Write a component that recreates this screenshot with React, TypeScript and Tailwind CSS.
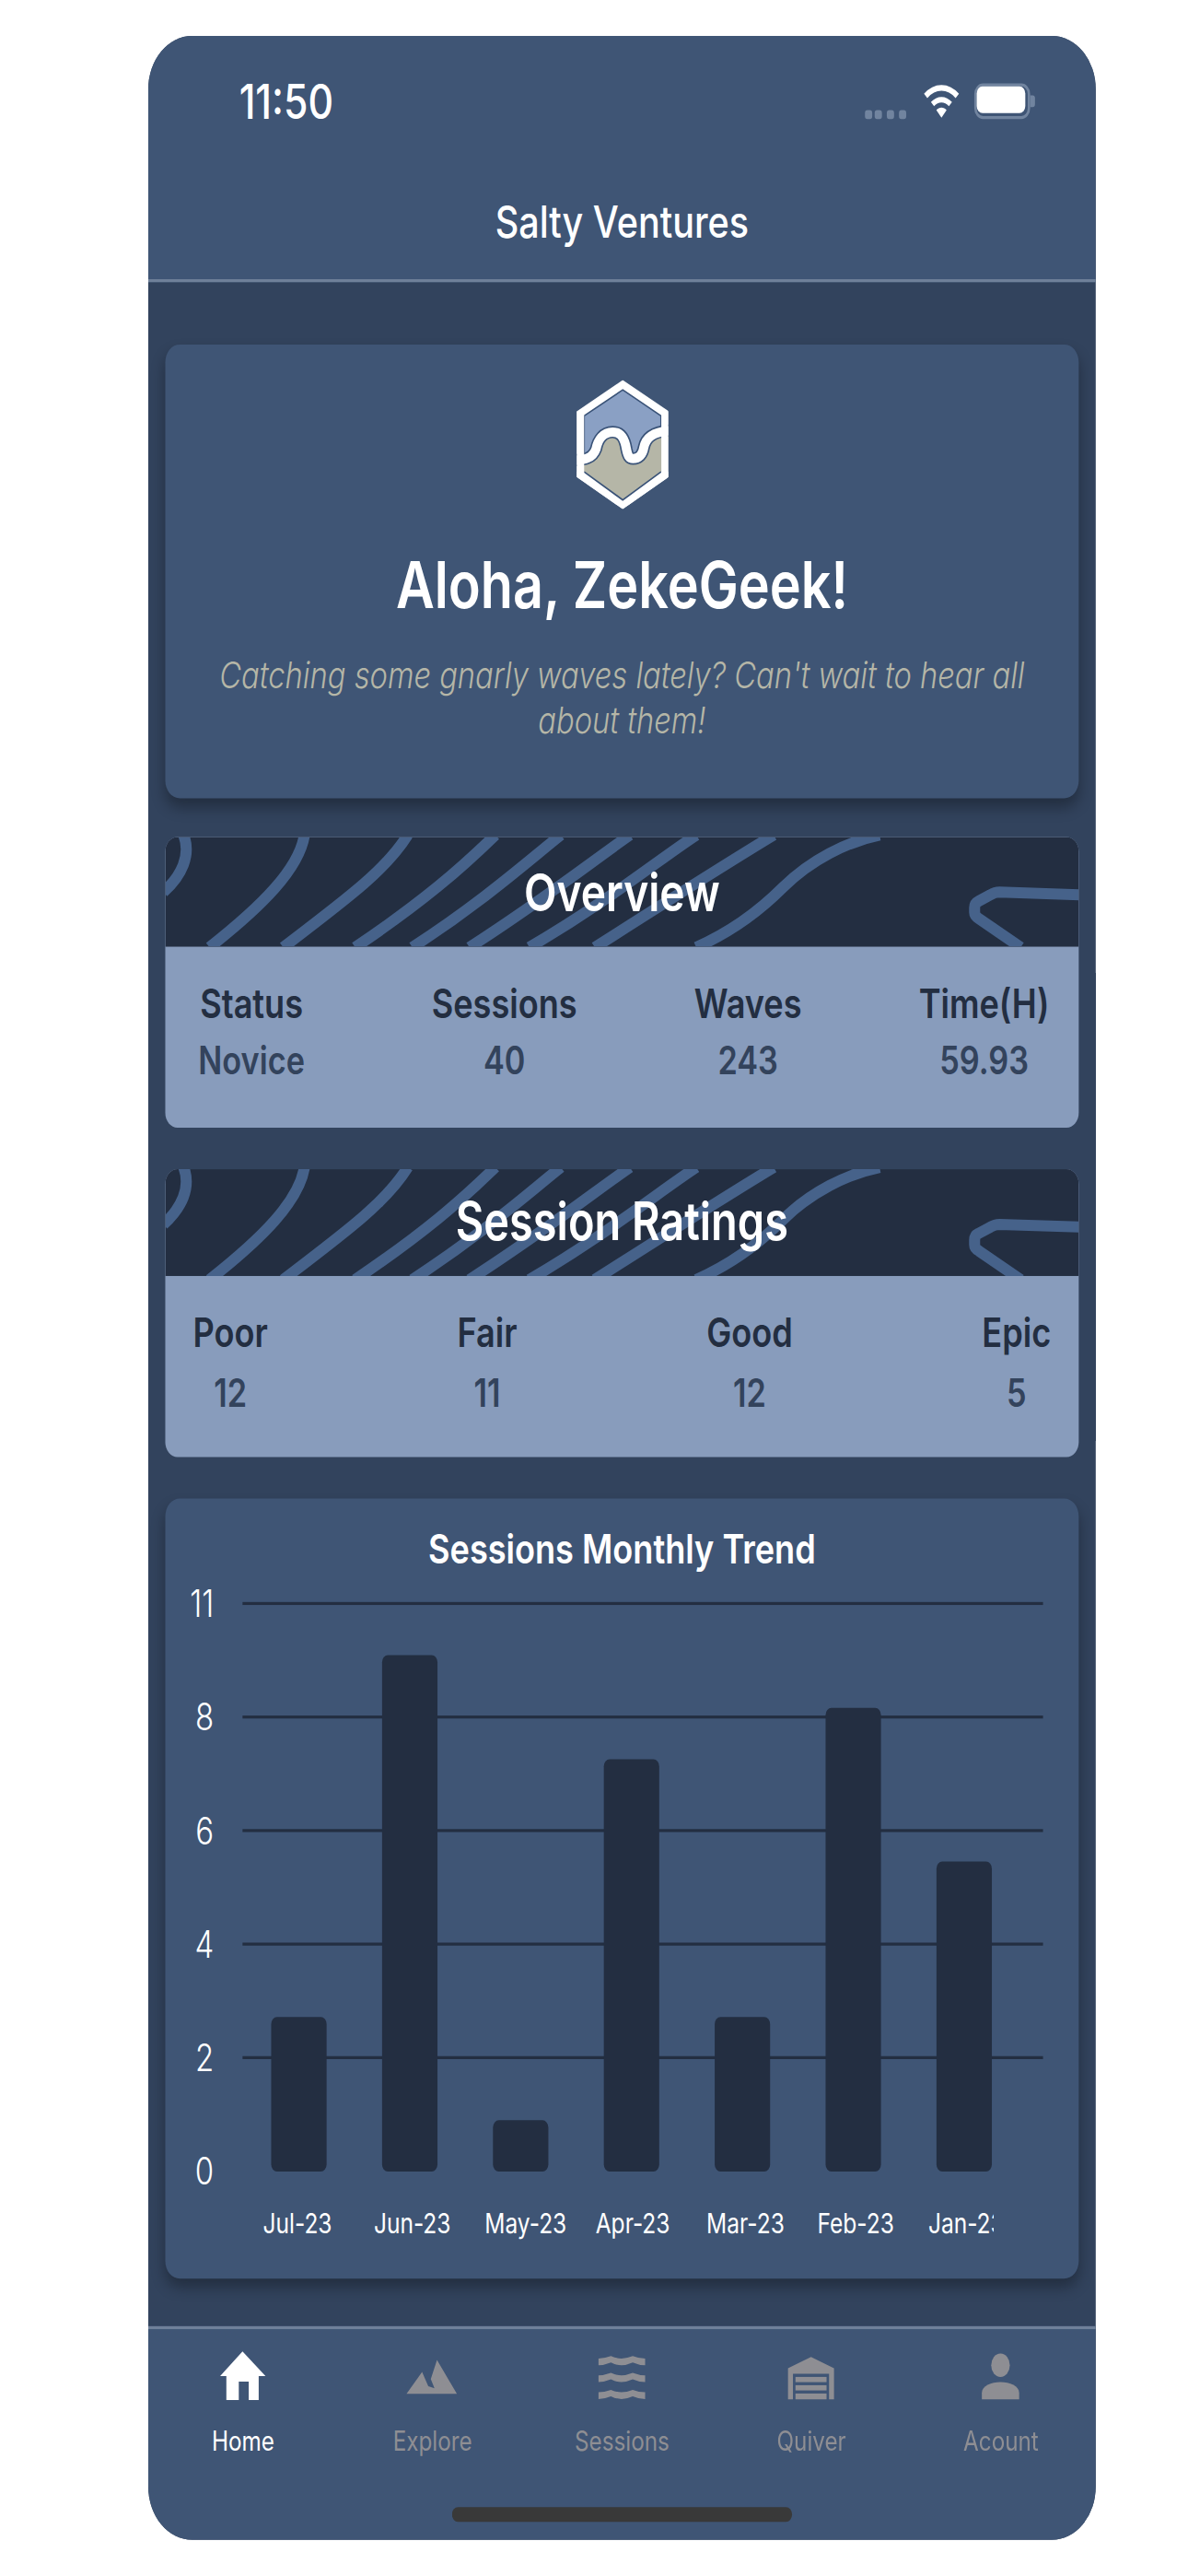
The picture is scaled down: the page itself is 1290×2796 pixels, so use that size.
const waveLines = [
  "M20 -2 C 28 20, 18 42, -2 60",
  "M151 -2 C 145 35, 105 75, 48 120",
  "M263 -2 C 240 35, 200 65, 128 120",
  "M358 -2 C 320 35, 280 70, 206 120",
  "M429 -2 C 395 25, 345 70, 268 120",
  "M504 -2 C 465 25, 415 65, 330 120",
  "M576 -2 C 535 25, 480 70, 395 120",
  "M660 -2 C 620 22, 560 60, 466 120",
  "M775 -2 C 740 5, 700 25, 670 55 C 640 85, 610 105, 576 120",
  "M995 63 L 905 60 Q 900 60 895 63 L 882 70 Q 878 72 878 77 L 878 82 Q 878 86 883 89 L 928 120",
];

const months = ["Jul-23", "Jun-23", "May-23", "Apr-23", "Mar-23", "Feb-23", "Jan-23"];
const barTops = [174.8, 52.8, 209.6, 87.9, 174.8, 70.6, 122.4];
const ticks = ["11", "8", "6", "4", "2", "0"];

function Logo() {
  const wave =
    "M-5 262 C 30 262, 55 255, 66 225 C 72 195, 90 170, 120 170 C 150 170, 160 195, 165 225 C 170 250, 175 257, 187 257 C 205 257, 218 245, 222 220 C 228 190, 250 168, 310 165";
  return (
    <svg viewBox="0 0 306 422" preserveAspectRatio="none" className="w-[38.6px] h-[43.5px] block">
      <defs>
        <clipPath id="hex-outer">
          <polygon points="153,0 303,102 303,317 153,422 3,317 3,102" />
        </clipPath>
      </defs>
      <polygon points="153,0 303,102 303,317 153,422 3,317 3,102" fill="#ffffff" />
      <polygon points="153,32 278,117 278,300 153,392 27,300 27,117" fill="#8aa0c4" stroke="#3a5378" strokeWidth="5" />
      <g clipPath="url(#hex-outer)">
        <path d={wave + " L 278 300 L 153 392 L 27 300 Z"} fill="#b5b6a7" />
        <polygon points="153,392 27,300 0,300 0,422 306,422 306,300 278,300" fill="#ffffff" />
        <polyline points="27,300 153,392 278,300" fill="none" stroke="#3a5378" strokeWidth="5" />
        <path d={wave} fill="none" stroke="#3a5378" strokeWidth="40" />
        <path d={wave} fill="none" stroke="#ffffff" strokeWidth="30" />
        <polyline points="3,102 3,317" fill="none" stroke="#ffffff" strokeWidth="48" />
        <polyline points="303,102 303,317" fill="none" stroke="#ffffff" strokeWidth="48" />
      </g>
    </svg>
  );
}

function SectionHeader({ title, titleSize }: { title: string; titleSize: string }) {
  return (
    <div className="relative h-[36.3px] bg-[#232e41] overflow-hidden flex justify-center">
      <svg viewBox="0 0 991 117" className="absolute inset-0 w-full h-full" preserveAspectRatio="none">
        {waveLines.map((d, i) => (
          <path key={i} d={d} fill="none" stroke="#46628a" strokeWidth="12" />
        ))}
      </svg>
      <div className={"relative text-white font-semibold leading-[22px] " + titleSize}>{title}</div>
    </div>
  );
}

function StatCard({
  title,
  titleSize,
  items,
  className,
  colClass,
}: {
  title: string;
  titleSize: string;
  items: [string, string][];
  className: string;
  colClass: string;
}) {
  return (
    <div className="rounded-[5px] overflow-hidden bg-[#889cbc] h-[97.6px] shrink-0">
      <SectionHeader title={title} titleSize={titleSize} />
      <div className={"flex justify-between pt-[11.2px] " + className}>
        {items.map(([label, value]) => (
          <div key={label} className={"flex flex-col items-center " + colClass}>
            <div className="text-[13.7px] leading-[17px] font-semibold text-[#232e41]">{label}</div>
            <div className="text-[13px] leading-[17px] mt-[2.4px] font-semibold text-[#33435c]">{value}</div>
          </div>
        ))}
      </div>
    </div>
  );
}

function Chart() {
  return (
    <svg viewBox="0 30 376 232" className="block w-[376px] h-[232px]">
      <defs>
        <clipPath id="label-clip">
          <rect x="0" y="230" width="341" height="30" />
        </clipPath>
      </defs>
      {ticks.map((t, i) => {
        const y = 35.4 + i * 38.27;
        return (
          <g key={t}>
            {i < 5 && <rect x="31.8" y={y - 0.5} width="329.5" height="1" fill="#232e41" />}
            <text x="20" y={y + 4.6} textAnchor="end" fontSize="12.5" fontWeight="300" fill="#ffffff">
              {t}
            </text>
          </g>
        );
      })}
      {barTops.map((top, i) => (
        <rect
          key={months[i]}
          x={43.6 + i * 45.64}
          y={top}
          width="22.8"
          height={226.9 - top}
          rx="2.4"
          fill="#232e41"
        />
      ))}
      <g clipPath="url(#label-clip)">
        {months.map((m, i) => (
          <text key={m} x={40.2 + i * 45.64} y="247.8" fontSize="9.3" fill="#ffffff">
            {m}
          </text>
        ))}
      </g>
    </svg>
  );
}

function HomeIcon() {
  return (
    <svg viewBox="0 0 100 170" preserveAspectRatio="none" className="w-[25.6px] h-[17.6px]">
      <path d="M50 5 L87 85 L76 85 L76 163 L60 163 L60 103 L44 103 L44 163 L24 163 L24 85 L14 85 Z" fill="#ffffff" />
    </svg>
  );
}

function ExploreIcon() {
  return (
    <svg viewBox="0 0 100 170" preserveAspectRatio="none" className="w-[25.6px] h-[17.6px]">
      <path d="M58 33 L90 143 L9 143 L34 72 L44 118 L54 125 L48 95 Z" fill="#8e8e93" />
    </svg>
  );
}

function SessionsIcon() {
  const wave = (t: number) =>
    `M13 ${t + 8} Q22 ${t + 8} 33 ${t} Q42 ${t + 8} 50 ${t + 8} Q58 ${t + 8} 68 ${t} Q78 ${t + 8} 88 ${t + 8} L88 ${t + 30} Q78 ${t + 30} 68 ${t + 21} Q58 ${t + 30} 50 ${t + 30} Q42 ${t + 30} 33 ${t + 21} Q22 ${t + 30} 13 ${t + 30} Z`;
  return (
    <svg viewBox="0 0 100 170" preserveAspectRatio="none" className="w-[25.6px] h-[17.6px]">
      {[20, 75, 130].map((t) => (
        <path key={t} d={wave(t)} fill="#8e8e93" />
      ))}
    </svg>
  );
}

function QuiverIcon() {
  return (
    <svg viewBox="0 0 100 170" preserveAspectRatio="none" className="w-[25.6px] h-[17.6px]" fill="#8e8e93">
      <path d="M50 23 L87 60 L87 161 L79 161 L79 78 L21 78 L21 161 L13 161 L13 60 Z" />
      <rect x="25" y="88" width="50" height="17" />
      <rect x="25" y="115" width="50" height="17" />
      <rect x="25" y="142" width="50" height="19" />
    </svg>
  );
}

function AccountIcon() {
  return (
    <svg viewBox="0 0 100 170" preserveAspectRatio="none" className="w-[25.6px] h-[17.6px]" fill="#8e8e93">
      <ellipse cx="50" cy="50" rx="15" ry="38" />
      <path d="M20 161 L20 140 C20 118 35 105 50 105 C65 105 80 118 80 140 L80 161 Z" />
    </svg>
  );
}

function StatusIcons() {
  return (
    <div className="flex items-end h-[12px] mb-[3.5px]">
      <div className="flex gap-[1.7px] mr-[6.5px]">
        {[0, 1, 2, 3].map((i) => (
          <div key={i} className="w-[3.1px] h-[3.1px] rounded-[1px] bg-[#71849f]" />
        ))}
      </div>
      <svg viewBox="0 0 15 12" className="w-[15px] h-[12px] mr-[6px]" fill="none" stroke="#ffffff">
        <path d="M1 4.2 C4.8 0.6 10.2 0.6 14 4.2" strokeWidth="2" />
        <path d="M3.8 7 C6 5 9 5 11.2 7" strokeWidth="1.9" />
        <path d="M5.4 9 L7.5 11.6 L9.6 9 C8.4 7.9 6.6 7.9 5.4 9 Z" fill="#ffffff" stroke="none" />
      </svg>
      <div className="relative w-[23.5px] h-[12px] rounded-[3.6px] border border-[#71849f] p-[0.6px]">
        <div className="w-full h-full rounded-[2.4px] bg-white" />
        <div className="absolute -right-[3px] top-[3.4px] w-[1.6px] h-[4px] rounded-r-[1px] bg-[#71849f]" />
      </div>
    </div>
  );
}

const tabs = [
  { label: "Home", icon: <HomeIcon />, active: true },
  { label: "Explore", icon: <ExploreIcon />, active: false },
  { label: "Sessions", icon: <SessionsIcon />, active: false },
  { label: "Quiver", icon: <QuiverIcon />, active: false },
  { label: "Acount", icon: <AccountIcon />, active: false },
];

export default function App() {
  return (
    <div className="w-[1290px] h-[2796px] bg-white overflow-hidden font-[Inter,sans-serif]">
      {/* phone layout is in iOS points, the screenshot is stretched unevenly */}
      <div className="ml-[161px] mt-[39px] w-[390px] h-[844px] origin-top-left scale-x-[2.638] scale-y-[3.22] rounded-[18px] overflow-hidden bg-[#32435d] flex flex-col">
        <div className="relative h-[83.3px] shrink-0 bg-[#3f5575] border-b-[0.7px] border-[#6f8099]">
          <div className="flex items-end justify-between pl-[37.4px] pr-[27px] h-[31.3px]">
            <div className="text-white text-[16.2px] leading-[18px] font-medium">11:50</div>
            <StatusIcons />
          </div>
          <div className="text-center text-white text-[15px] leading-[20px] font-medium mt-[21.9px]">
            Salty Ventures
          </div>
        </div>

        <div className="flex-1 flex flex-col gap-[13.8px] px-[7px] pt-[20.4px]">
          <div className="h-[153px] shrink-0 rounded-[6px] bg-[#3f5575] shadow-[0_3px_5px_rgba(0,0,0,0.3)] flex flex-col items-center pt-[12.4px]">
            <Logo />
            <div className="text-white text-[21.8px] leading-[29px] font-semibold mt-[11.6px]">Aloha, ZekeGeek!</div>
            <div className="text-[#b5b6a7] text-[12.4px] leading-[15px] italic font-[350] text-center px-[14px] mt-[8px]">
              Catching some gnarly waves lately? Can't wait to hear all about them!
            </div>
          </div>

          <StatCard
            title="Overview"
            titleSize="text-[17.5px] pt-[7.7px]"
            className="pl-[13.6px] pr-[12px]"
            colClass="first:pr-[4px]"
            items={[
              ["Status", "Novice"],
              ["Sessions", "40"],
              ["Waves", "243"],
              ["Time(H)", "59.93"],
            ]}
          />
          <StatCard
            title="Session Ratings"
            titleSize="text-[17.8px] pt-[7.3px]"
            className="pl-[11.4px] pr-[11.4px]"
            colClass=""
            items={[
              ["Poor", "12"],
              ["Fair", "11"],
              ["Good", "12"],
              ["Epic", "5"],
            ]}
          />

          <div className="h-[262.4px] shrink-0 rounded-[6px] bg-[#3f5575] shadow-[0_3px_5px_rgba(0,0,0,0.3)] overflow-hidden">
            <div className="h-[30px] text-center text-white text-[13.7px] leading-[17px] font-semibold pt-[8.6px]">
              Sessions Monthly Trend
            </div>
            <Chart />
          </div>
        </div>

        <div className="relative h-[71.7px] shrink-0 bg-[#3f5575] border-t-[0.7px] border-[#6f8099]">
          <div className="grid grid-cols-5 pt-[6.9px]">
            {tabs.map((t) => (
              <div key={t.label} className="flex flex-col items-center">
                {t.icon}
                <div
                  className={
                    "text-[9.2px] leading-[12px] mt-[7.5px] " + (t.active ? "text-white" : "text-[#8e8e93]")
                  }
                >
                  {t.label}
                </div>
              </div>
            ))}
          </div>
          <div className="absolute left-[125px] top-[60px] w-[139.5px] h-[4.6px] rounded-full bg-[#393939]" />
        </div>
      </div>
    </div>
  );
}
